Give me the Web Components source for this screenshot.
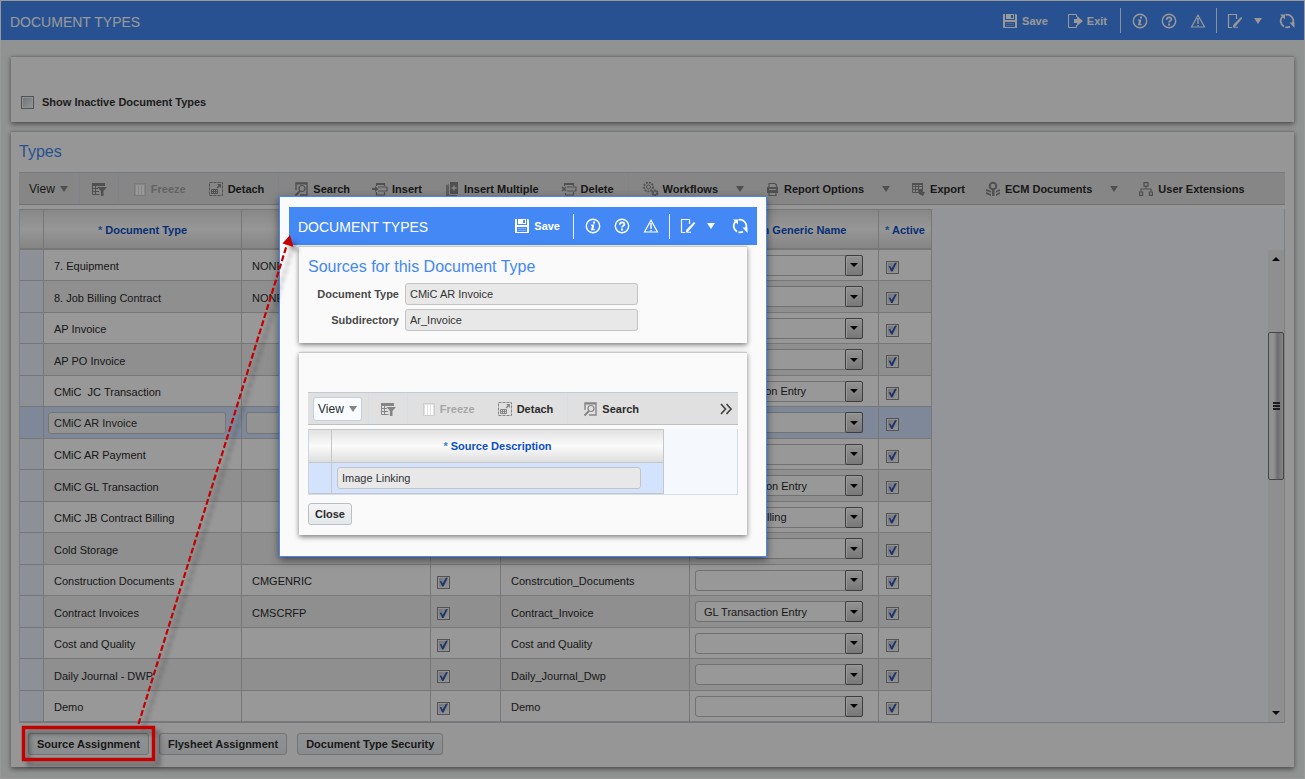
<!DOCTYPE html>
<html lang="en">
<head>
<meta charset="utf-8">
<title>Document Types</title>
<style>
  html, body { margin: 0; height: 100%; }
  body { font: 11px/14px "Liberation Sans", Arial, sans-serif; color: #333; background: #f2f5f3; }
</style>
</head>
<body>
<doc-types-page></doc-types-page>

<script>
const ICONS = {
  save: '<path fill="currentColor" d="M1 1h13l1 1v13H1z"/><path fill="var(--icon-gap)" d="M3 1h1v5h8V1h1v6H3zM9 2h2v3H9zM3 9h10v5H3z"/><path fill="currentColor" d="M4 10h8v1H4zM4 12h8v1H4z" opacity=".3"/>',
  exit: '<path fill="none" stroke="currentColor" d="M9.500 4V1.500h-8v13h8V12"/><path fill="currentColor" d="M7 6h3V3l6 5-6 5v-3H7z"/>',
  info: '<circle cx="8" cy="8" r="6.700" fill="none" stroke="currentColor" stroke-width="1.400"/><path fill="currentColor" d="M8 3.500h2v2H8zM6 6.500h3.400L8.400 11h1.400l-.3 1.200H5.900L7 7.700H5.800z"/>',
  help: '<circle cx="8" cy="8" r="6.700" fill="none" stroke="currentColor" stroke-width="1.400"/><path fill="none" stroke="currentColor" stroke-width="1.700" d="M5.700 6.700C5.700 3.600 10.400 3.600 10.400 6.200 10.400 7.800 8 7.700 8 9.600"/><path fill="currentColor" d="M7 10.500h2v2H7z"/>',
  warn: '<path fill="none" stroke="currentColor" stroke-width="1.200" d="M8 2.200L14.500 14h-13z"/><path fill="currentColor" d="M7.300 5h1.400v6H7.300zM7.300 12h1.400v1.200H7.300z"/>',
  edit: '<path fill="none" stroke="currentColor" stroke-width="1.200" d="M9.500 6V1.500h-8v13h3.500"/><path fill="currentColor" d="M14 4l1.300 1.300-6.500 7.700L5.500 15l1-3.500zM7 13.800h4v1H7z"/>',
  refresh: '<path fill="none" stroke="currentColor" stroke-width="1.800" d="M5 13.600A6.300 6.300 0 0 1 3.500 3.600M6.500 1.900A6.300 6.300 0 0 1 13.700 10.600M11 13.600A6.300 6.300 0 0 1 6.500 14.100"/><path fill="currentColor" d="M1 1.500h5v5zM15.500 15v-5.500H10.500z"/>',
  filter: '<path fill="currentColor" d="M1 2h13v3H1z"/><path fill="none" stroke="currentColor" d="M1.500 2v11.500h7M1 7.500h6M1 10.500h7M4.500 4v9"/><path fill="currentColor" d="M6.500 6H16l-3.500 4v5h-2.600v-5z"/>',
  freeze: '<path fill="none" stroke="currentColor" stroke-dasharray="1 1" d="M3.500 2.500h11v12h-11z"/><path fill="#fff" d="M5 4h2v10H5zM8 4h2v10H8zM11 4h2v10h-2z"/>',
  detach: '<path fill="none" stroke="currentColor" stroke-dasharray="3 1" d="M1.500 1.500h13v13h-13z"/><path fill="currentColor" d="M9 3h4v4l-1.400-1.400-2 2-1-1 2-2z"/><path fill="none" stroke="currentColor" d="M3.500 8.500h6v4h-6zM3 10.500h7M5.500 8v5M7.500 8v5"/>',
  search: '<path fill="none" stroke="currentColor" stroke-width="1.400" d="M3 9V2h11v12H7"/><circle cx="9" cy="7.500" r="3" fill="none" stroke="currentColor" stroke-width="1.200"/><path stroke="currentColor" stroke-width="2" d="M7 10l-4.500 4.500"/><path fill="currentColor" d="M3 2h11v1.500H3z"/>',
  insert: '<path fill="none" stroke="currentColor" stroke-width="1.200" d="M4.500 5V2.500h8V5M6 6h9v4H6M4.500 11v3h8v-3"/><path fill="currentColor" d="M0 7h3V5l3.500 3L3 11V9H0zM5 3h7v1H5z"/>',
  multi: '<path fill="currentColor" d="M6 1h8v12H6z"/><path fill="currentColor" opacity=".75" d="M2 4l3-1v11h8v1H2z"/><path stroke="#e0e0e0" stroke-width="1.400" d="M10 4.500v5M7.500 7h5"/>',
  del: '<path fill="none" stroke="currentColor" stroke-width="1.200" d="M3.500 5V2.500h9V5M6 6h9v4H6M4.500 12v2h8v-3"/><path stroke="currentColor" stroke-width="1.400" d="M1 6l4 4M5 6l-4 4"/><path fill="currentColor" d="M4 3h8v1H4z"/>',
  gears: '<circle cx="5.500" cy="6" r="4.500" fill="none" stroke="currentColor" stroke-width="1.700" stroke-dasharray="2 1"/><circle cx="5.500" cy="6" r="2" fill="none" stroke="currentColor"/><circle cx="12" cy="12" r="2.300" fill="none" stroke="currentColor" stroke-width="2.400" stroke-dasharray="1.700 .5"/>',
  print: '<path fill="none" stroke="currentColor" stroke-width="1.200" d="M5 6V2.500h6L12.500 4v2M5 11.500v3h7v-3"/><path fill="currentColor" fill-rule="evenodd" d="M3 6h11v6H3zM5 8v1h7V8z"/>',
  export: '<path fill="none" stroke="currentColor" d="M2.500 2.500h10v9h-10zM2 5.500h11M2 8.500h11M5.500 2v10M8.500 2v10"/><path fill="currentColor" d="M2 2h11v2H2zM9 8h3v3h3l-2 4-4-2z"/>',
  ecm: '<circle cx="8" cy="5" r="3.300" fill="none" stroke="currentColor" stroke-width="2"/><path fill="currentColor" d="M7 8h2.500v7H7zM1 8l5 2v1.500L1 10zM1 11l5 2v2l-5-2zM15 8l-4 2v1.500l4-1.500zM15 11l-4 2v2l4-2z"/>',
  tree: '<path fill="none" stroke="currentColor" stroke-width="1.200" d="M6 1.600h4v3.500H6zM8 5v3M3 11V8h10v3M1.600 11h3v3.400h-3zM11.400 11h3v3.400h-3z"/>',
  more: '<path fill="none" stroke="#444" stroke-width="1.700" d="M3 3l4.500 5L3 13M8.500 3l4.500 5-4.500 5"/>'
};

const BUTTON_RESET = `
  button { font: inherit; color: inherit; background: none; border: 0; margin: 0; padding: 0; }`;

class UiElement extends HTMLElement {
  connectedCallback() {
    if (this.shadowRoot) return;
    this.attachShadow({ mode: 'open' }).innerHTML = this.render();
  }
  attr(name) { return this.getAttribute(name) || ''; }
}

customElements.define('ui-icon', class extends UiElement {
  render() {
    return `<style>:host{display:block;width:16px;height:16px;flex:none}svg{display:block}</style>
      <svg width="16" height="16" viewBox="0 0 16 16" aria-hidden="true">${ICONS[this.attr('name')]}</svg>`;
  }
});

/* Separator between groups of tools */
customElements.define('ui-sep', class extends UiElement {
  render() {
    return `<style>:host{display:block;width:1px;height:var(--sep-height,31px);background:var(--sep-color,#d5dde6);flex:none}</style>`;
  }
});

/* Button with an icon, a label and, with the menu attribute, a drop-down triangle */
customElements.define('ui-tool', class extends UiElement {
  render() {
    const icon = this.attr('icon');
    const text = this.textContent.trim();
    return `<style>${BUTTON_RESET}
        :host{display:block;flex:none}
        button{display:flex;align-items:center;gap:4px;height:24px;font-weight:bold;white-space:nowrap}
        ui-icon{color:var(--icon-color,#858585)}
        i{border:solid transparent;border-width:6px 4px 0;border-top-color:var(--icon-color,#858585);margin-left:14px}
        :host([plain]) button{font-weight:normal;font-size:12px}
        :host([plain]) i{margin-left:1px}
        :host([boxed]){margin:0 -5px}
        :host([boxed]) button{padding:0 4px;border:1px solid #c4cfdc;border-radius:3px;background:#f8fbff}
        :host([disabled]) button{color:#a6a6a6}
        :host([disabled]) ui-icon{color:#bcbcbc}
        :host([disabled]){color:#a6a6a6}
      </style>
      <button type="button" ${this.hasAttribute('disabled') ? 'disabled' : ''} ${text ? '' : `aria-label="${this.attr('name')}"`}>
        ${icon ? `<ui-icon name="${icon}"></ui-icon>` : ''}${text ? '<slot></slot>' : ''}${this.hasAttribute('menu') ? '<i></i>' : ''}
      </button>`;
  }
});

/* Blue title bar */
customElements.define('title-bar', class extends UiElement {
  render() {
    return `<style>${BUTTON_RESET}
        :host{display:flex;align-items:center;justify-content:space-between;height:var(--bar-height,39px);padding:0 9px;background:#4388f4;color:#fff;
          --icon-color:#fff;--icon-gap:#4388f4;--sep-height:25px;--sep-color:#e6efff;box-sizing:border-box}
        h1{font-size:14px;line-height:20px;font-weight:normal;margin:0;padding-top:2px}
        nav,.set{display:flex;align-items:center}
        .text{gap:19px}
        .pages{gap:13px;margin:0 10px 0 11px}
        nav>ui-sep:first-of-type{margin-left:13px}
        .edit{margin:0 11px 0 10px}
        .drop{margin-right:16px;width:9px;height:24px;display:flex;align-items:center}
        .drop::before{content:"";border:solid transparent;border-width:6px 4px 0;border-top-color:#fff}
      </style>
      <h1>DOCUMENT TYPES</h1>
      <nav aria-label="Page actions">
        <div class="set text"><slot></slot></div>
        <ui-sep></ui-sep>
        <div class="set pages">
          <ui-tool icon="info" name="Information"></ui-tool>
          <ui-tool icon="help" name="Help"></ui-tool>
          <ui-tool icon="warn" name="Warnings"></ui-tool>
        </div>
        <ui-sep></ui-sep>
        <ui-tool class="edit" icon="edit" name="Edit"></ui-tool>
        <button class="drop" type="button" aria-label="Edit options"></button>
        <ui-tool icon="refresh" name="Refresh"></ui-tool>
      </nav>`;
  }
});

customElements.define('ui-panel', class extends UiElement {
  render() {
    const t = this.attr('heading');
    return `<style>
        :host{display:block;background:#fafafa;border-top:1px solid #c9c9c9;box-sizing:border-box;padding:0 9px 12px var(--panel-left,9px);
          box-shadow:0 2px 5px rgba(0,0,0,.5)}
        h2{margin:0;padding-top:var(--heading-pad,0);font-size:16px;line-height:var(--heading-height,40px);font-weight:normal;color:#4388f4}
      </style>${t ? `<h2>${t}</h2>` : ''}<slot></slot>`;
  }
});

customElements.define('tool-bar', class extends UiElement {
  render() {
    return `<style>
        :host{display:flex;align-items:center;height:33px;box-sizing:border-box;padding:0 4px 0 10px;margin-bottom:4px;
          background:#e0e0e0;border-top:1px solid #c3cad6;border-bottom:1px solid #bfbfbf;color:#2b2b2b}
      </style><slot></slot>`;
  }
});

/* Group of neighbouring tools */
customElements.define('tool-group', class extends UiElement {
  render() {
    return `<style>:host{display:flex;align-items:center;gap:20px;margin:0 14px}
      :host([row]){gap:22px}
      :host([tight]){margin:0 11px}:host([first]){margin:0 11px 0 0}:host([after]){gap:22px;margin:0 14px 0 12px}
      :host([end]){margin:0 0 0 auto}</style><slot></slot>`;
  }
});

customElements.define('ui-button', class extends UiElement {
  render() {
    return `<style>:host{display:block}
      button{font:bold 11px/14px "Liberation Sans",Arial,sans-serif;color:#2b2b2b;height:22px;padding:0 var(--button-pad,6px);border:1px solid #bcc0c4;
        border-radius:3px;background:linear-gradient(#f3f4f5,#e4e8ea);white-space:nowrap;display:block}
      </style><button type="button"><slot></slot></button>`;
  }
});

const CHECKBOX = `
  input[type=checkbox]{appearance:none;box-sizing:border-box;width:13px;height:13px;margin:0;border:1px solid #8a8a8a;
    background:linear-gradient(135deg,#b9bec6,#f8f8f8);box-shadow:inset 0 0 0 1px #f2f2f2;display:block;flex:none}
  input[type=checkbox]:checked::before{content:"";display:block;width:11px;height:11px;background:#2f55b0;
    clip-path:polygon(16% 44%,30% 40%,43% 64%,72% 12%,90% 10%,50% 92%,38% 92%)}`;

customElements.define('check-option', class extends UiElement {
  render() {
    return `<style>${CHECKBOX}
      :host{display:flex;align-items:center;gap:8px;padding:37px 0 0 2px;font-weight:bold}
      label{line-height:16px}
      input{margin-top:2px}</style>
      <input type="checkbox" id="c"><label for="c"><slot></slot></label>`;
  }
});

customElements.define('form-field', class extends UiElement {
  render() {
    return `<style>
      :host{display:grid;grid-template-columns:91px minmax(0,233px);gap:6px;align-items:center;margin-top:4px}
      :host([first]){margin-top:0}
      label{text-align:right;font-weight:bold;color:#4a4a4a}
      input{box-sizing:border-box;width:100%;height:22px;font:inherit;color:#333;background:#e8e8e8;border:1px solid #c4c4c4;border-radius:3px;padding:0 4px;margin:0}
      </style><label for="f">${this.attr('label')}</label><input id="f" type="text" readonly value="${this.attr('value')}">`;
  }
});

const TABLE = `
  table{border-collapse:separate;border-spacing:0;table-layout:fixed;border-left:1px solid #ccd6e2;flex:none}
  th,td{box-sizing:border-box;padding:0;border-right:1px solid #c6c6c6;border-bottom:1px solid #c6c6c6;overflow:hidden;white-space:nowrap}
  th{color:#0c4fc4;font-weight:bold;text-align:center;border-top:1px solid #c6c6c6;background:linear-gradient(#e2e2e2,#fbfbfb 50%,#dedede)}
  th b{color:#3d7fd0}
  input[type=text]{box-sizing:border-box;height:22px;font:inherit;color:#333;border:1px solid #c4c4c4;border-radius:3px;padding:0 5px;margin:0;display:block;background:#e8e8e8}
  tr.on td{background:#d3e3fd!important}`;

/* Drop-down with a raised arrow button */
customElements.define('grid-select', class extends UiElement {
  render() {
    return `<style>
      :host{display:grid;grid-template-columns:minmax(0,1fr) 18px;width:168px;height:21px}
      select{grid-area:1/1/2/3;appearance:none;font:inherit;color:#2b2b2b;background:#fdfdfd;border:1px solid #bdbdbd;border-radius:3px;padding:0 8px;margin:0;min-width:0}
      i{grid-area:1/2;pointer-events:none;display:grid;place-items:center;border:1px solid #666;border-radius:2px;
        background:linear-gradient(#f4f4f4,#c8c8c8);box-shadow:inset 1px 1px #fff}
      i::before{content:"";border:solid transparent;border-width:4px 4px 0;border-top-color:#000}
      </style><select aria-label="Generic name"><option>${this.attr('value')}</option></select><i></i>`;
  }
});

const ROWS = [
  ['7. Equipment', 'NONE', '', ''],
  ['8. Job Billing Contract', 'NONE', '', ''],
  ['AP Invoice', '', '', ''],
  ['AP PO Invoice', '', '', ''],
  ['CMiC&nbsp; JC Transaction', '', '', 'JC Transaction Entry'],
  ['CMiC AR Invoice', '', '', ''],
  ['CMiC AR Payment', '', '', ''],
  ['CMiC GL Transaction', '', '', 'GL Transaction Entry'],
  ['CMiC JB Contract Billing', '', '', 'JB Project Billing'],
  ['Cold Storage', '', '', ''],
  ['Construction Documents', 'CMGENRIC', 'Constrcution_Documents', ''],
  ['Contract Invoices', 'CMSCRFP', 'Contract_Invoice', 'GL Transaction Entry'],
  ['Cost and Quality', '', 'Cost and Quality', ''],
  ['Daily Journal - DWP', '', 'Daily_Journal_Dwp', ''],
  ['Demo', '', 'Demo', '']
];
const SELECTED = 5;

customElements.define('types-grid', class extends UiElement {
  render() {
    const rows = ROWS.map(([type, code, dir, generic], i) => {
      const on = i === SELECTED;
      const text = (v, w, label) => on
        ? `<td class="edit"><input type="text" aria-label="${label}" value="${v}" style="width:${w}px"></td>` : `<td>${v}</td>`;
      return `<tr class="${on ? 'on' : ''}"><td></td>${text(type, 178, 'Document type')}${text(code, 170, 'Code')}
        <td class="box"><input type="checkbox" checked aria-label="Option"></td><td>${dir}</td>
        <td class="sel"><grid-select value="${generic}"></grid-select></td>
        <td class="box last"><input type="checkbox" checked aria-label="Active"></td></tr>`;
    }).join('');
    return `<style>${TABLE}${CHECKBOX}
      :host{display:flex;justify-content:space-between;background:#f5f8fd;border-right:1px solid #ccd6e2;border-bottom:1px solid #c3ccd6;margin-bottom:10px}
      table{width:913px}
      th{height:41px;border-bottom-width:2px;padding-top:2px}
      td{padding:2px 10px 0;height:31px;background:#fdfdfd;color:#2b2b2b}
      tr:nth-child(even) td{height:32px;background:#efefef}
      tbody td:first-child,tbody tr:nth-child(even) td:first-child{background:#ecf2fc}
      td.edit{padding:0 4px}
      td.edit input{background:#f5f5f5}
      td.sel{padding:0 5px}
      td.box{padding:4px 6px 0}
      td.last{padding-left:7px}
      .bar{display:flex;flex-direction:column;width:16px;margin-top:41px;background:#efefef}
      .bar i{flex:0 0 18px;display:grid;place-items:center}
      .bar i::before{content:"";border:solid transparent;border-width:0 4px 4px;border-bottom-color:#111}
      .bar i:last-child::before{transform:rotate(180deg)}
      .bar .a{flex:64}.bar .c{flex:225}
      .thumb{flex:147;border:1px solid #777;border-radius:2px;background:linear-gradient(90deg,#f2f2f2 35%,#b8b8b8 60%,#dcdcdc);display:grid;place-items:center}
      .thumb::before{content:"";width:7px;height:8px;background:repeating-linear-gradient(#333 0 2px,transparent 2px 3px)}
      </style>
      <table><colgroup><col style="width:24px"><col style="width:198px"><col style="width:189px"><col style="width:70px"><col style="width:189px"><col style="width:189px"><col style="width:53px"></colgroup>
      <thead><tr><th></th><th><b>*</b> Document Type</th><th></th><th></th><th></th><th>Common Generic Name</th><th><b>*</b> Active</th></tr></thead>
      <tbody>${rows}</tbody></table>
      <div class="bar"><i></i><span class="a"></span><span class="thumb"></span><span class="c"></span><i></i></div>`;
  }
});

customElements.define('source-grid', class extends UiElement {
  render() {
    return `<style>${TABLE}
      :host{display:flex;background:#f5f8fd;border-right:1px solid #d3dde9;border-bottom:1px solid #d3dde9;margin-bottom:8px}
      table{width:356px}
      th{height:34px}td{height:31px}
      td:last-child{padding-left:5px}
      input[type=text]{width:304px;padding:0 4px}
      </style>
      <table><colgroup><col style="width:23px"><col></colgroup>
      <thead><tr><th></th><th><b>*</b> Source Description</th></tr></thead>
      <tbody><tr class="on"><td></td><td><input type="text" readonly aria-label="Source Description" value="Image Linking"></td></tr></tbody></table>`;
  }
});

/* Dialog that lists the sources of the chosen document type */
customElements.define('source-dialog', class extends UiElement {
  render() {
    return `<style>
      :host{display:block;position:absolute;left:278px;top:195px;width:488px;box-sizing:border-box;padding:10px 9px 21px;
        background:#fafafa;border:1px solid #4388f4;box-shadow:0 3px 8px rgba(0,0,0,.5);--bar-height:38px;--heading-pad:4px;--heading-height:32px}
      ui-panel{margin:1px 10px 0}
      ui-panel+ui-panel{margin-top:9px;padding-top:39px;padding-bottom:10px}
      ui-button{width:max-content}
      </style>
      <title-bar><ui-tool icon="save">Save</ui-tool></title-bar>
      <ui-panel heading="Sources for this Document Type">
        <form-field first label="Document Type" value="CMiC AR Invoice"></form-field>
        <form-field label="Subdirectory" value="Ar_Invoice"></form-field>
      </ui-panel>
      <ui-panel>
        <tool-bar>
          <tool-group first><ui-tool plain boxed menu>View</ui-tool></tool-group><ui-sep></ui-sep>
          <tool-group tight><ui-tool icon="filter" name="Query by example"></ui-tool></tool-group><ui-sep></ui-sep>
          <tool-group after><ui-tool icon="freeze" disabled>Freeze</ui-tool><ui-tool icon="detach">Detach</ui-tool></tool-group><ui-sep></ui-sep>
          <tool-group><ui-tool icon="search">Search</ui-tool></tool-group>
          <tool-group end><ui-tool icon="more" name="More tools"></ui-tool></tool-group>
        </tool-bar>
        <source-grid></source-grid>
        <ui-button>Close</ui-button>
      </ui-panel>`;
  }
});

/* Red frame and dashed arrow that point from the button to its dialog */
customElements.define('call-out', class extends UiElement {
  render() {
    return `<style>:host{display:block;position:absolute;left:-1px;top:189px;pointer-events:none}
      svg{display:block;filter:drop-shadow(5px 5px 2px rgba(0,0,0,.35))}</style>
      <svg width="310" height="585" viewBox="0 190 310 585" aria-hidden="true">
        <rect x="23.500" y="727.500" width="130" height="32" fill="none" stroke="#c40000" stroke-width="3.500"/>
        <path d="M138.500 724L286.500 246" stroke="#c40000" stroke-width="2.200" stroke-dasharray="6 2.500"/>
        <path d="M290 235l3.500 12-11-3.500z" fill="#c40000"/>
      </svg>`;
  }
});

customElements.define('doc-types-page', class extends UiElement {
  render() {
    return `<style>
      :host{display:block;position:relative;min-height:100%;box-sizing:border-box;border:1px solid #fff;background:#f2f5f3}
      main{padding:16px 10px 10px;--panel-left:8px}
      ui-panel+ui-panel{margin-top:9px}
      .buttons{display:flex;gap:10px;padding-left:9px;--button-pad:8px}
      .shade{position:absolute;inset:-1px;background:rgba(0,0,0,.4)}
      </style>
      <title-bar><ui-tool icon="save">Save</ui-tool><ui-tool icon="exit">Exit</ui-tool></title-bar>
      <main>
        <ui-panel><check-option>Show Inactive Document Types</check-option></ui-panel>
        <ui-panel heading="Types">
          <tool-bar>
            <tool-group first><ui-tool plain menu>View</ui-tool></tool-group><ui-sep></ui-sep>
            <tool-group tight><ui-tool icon="filter" name="Query by example"></ui-tool></tool-group><ui-sep></ui-sep>
            <tool-group after><ui-tool icon="freeze" disabled>Freeze</ui-tool><ui-tool icon="detach">Detach</ui-tool></tool-group><ui-sep></ui-sep>
            <tool-group row><ui-tool icon="search">Search</ui-tool><ui-tool icon="insert">Insert</ui-tool><ui-tool icon="multi">Insert Multiple</ui-tool><ui-tool icon="del">Delete</ui-tool></tool-group><ui-sep></ui-sep>
            <tool-group><ui-tool icon="gears" menu>Workflows</ui-tool><ui-tool icon="print" menu>Report Options</ui-tool><ui-tool icon="export">Export</ui-tool><ui-tool icon="ecm" menu>ECM Documents</ui-tool><ui-tool icon="tree">User Extensions</ui-tool></tool-group>
          </tool-bar>
          <types-grid></types-grid>
          <div class="buttons"><ui-button>Source Assignment</ui-button><ui-button>Flysheet Assignment</ui-button><ui-button>Document Type Security</ui-button></div>
        </ui-panel>
      </main>
      <div class="shade"></div>
      <source-dialog role="dialog" aria-label="Document Types"></source-dialog>
      <call-out></call-out>`;
  }
});
</script>
</body>
</html>
